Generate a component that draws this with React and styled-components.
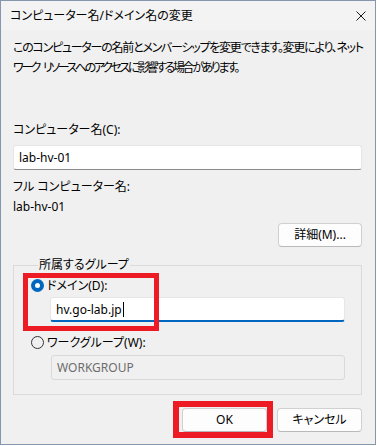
import React from "react";
import styled, { createGlobalStyle } from "styled-components";

const GlobalStyle = createGlobalStyle`
  html, body {
    margin: 0;
    padding: 0;
    background: #ffffff;
  }
  body {
    font-family: "Noto Sans", "Noto Sans CJK JP", sans-serif;
    font-size: 12px;
    color: #000;
    font-feature-settings: "palt";
  }
`;

const Dialog = styled.div`
  box-sizing: border-box;
  width: 376px;
  height: 445px;
  border: 1px solid #8497ad;
  background: #f0f0f0;
  display: flex;
  flex-direction: column;
`;

const TitleBar = styled.div`
  height: 29px;
  background: #f3f3f3;
  display: flex;
  align-items: center;
  justify-content: space-between;
  padding: 0 9px 0 9px;
  & .title {
    line-height: 20px;
    white-space: nowrap;
  }
`;

const Body = styled.div`
  padding: 0 13px 0 12px;
  display: flex;
  flex-direction: column;
`;

const Text = styled.div`
  line-height: 20px;
  white-space: nowrap;
  margin-top: ${(p) => p.$top || 0}px;
  letter-spacing: ${(p) => p.$tight || 0}px;
  word-spacing: ${(p) => (p.$tight ? 3 : 0)}px;
  color: ${(p) => (p.$muted ? "#6d6d6d" : "#000")};
`;

const TextBox = styled.div`
  box-sizing: border-box;
  height: 25px;
  margin-top: ${(p) => p.$top || 0}px;
  margin-left: ${(p) => p.$indent || 0}px;
  padding-left: 5px;
  display: flex;
  align-items: center;
  background: ${(p) => (p.$disabled ? "#f0f0f0" : "#ffffff")};
  border: 1px solid ${(p) => (p.$disabled ? "#d9d9d9" : "#e6e6e6")};
  border-bottom: ${(p) =>
    p.$focused ? "2px solid #0067c0" : p.$disabled ? "1px solid #d9d9d9" : "1px solid #8a8a8a"};
  border-radius: 3px;
  color: ${(p) => (p.$disabled ? "#6d6d6d" : "#000")};
  white-space: nowrap;
`;

const Caret = styled.span`
  display: inline-block;
  width: 1px;
  height: 15px;
  background: #000;
  margin-left: 1px;
`;

const ButtonRow = styled.div`
  display: flex;
  justify-content: flex-end;
  gap: 10px;
  margin-top: ${(p) => p.$top || 0}px;
`;

const Button = styled.div`
  box-sizing: border-box;
  width: ${(p) => p.$w || 84}px;
  height: 24px;
  background: #fdfdfd;
  border: 1px solid #d0d0d0;
  border-bottom-color: #b9b9b9;
  border-radius: 4px;
  display: flex;
  align-items: center;
  justify-content: center;
  line-height: 20px;
`;

const Highlight = styled.span`
  position: relative;
  display: inline-flex;
`;

const RedBox = styled.span`
  position: absolute;
  top: ${(p) => p.$t}px;
  left: ${(p) => p.$l}px;
  width: ${(p) => p.$w}px;
  height: ${(p) => p.$h}px;
  box-sizing: border-box;
  border: ${(p) => p.$b}px solid #ed1c24;
  pointer-events: none;
`;

const Group = styled.fieldset`
  position: relative;
  margin: 8px 0 0 0;
  padding: 0 16px 14px 17px;
  border: 1px solid #dadada;
  border-radius: 0;
  min-width: 0;
  & legend {
    padding: 0 1px;
    margin-left: 7px;
    line-height: 20px;
  }
`;

const RadioRow = styled.div`
  display: flex;
  align-items: center;
  gap: 3px;
  height: 20px;
  margin-top: ${(p) => p.$top || 0}px;
  white-space: nowrap;
`;

const Radio = styled.span`
  box-sizing: border-box;
  width: 13px;
  height: 13px;
  border-radius: 50%;
  display: flex;
  align-items: center;
  justify-content: center;
  background: ${(p) => (p.$checked ? "#0067c0" : "transparent")};
  border: ${(p) => (p.$checked ? "none" : "1px solid #333")};
  &::after {
    content: "";
    display: ${(p) => (p.$checked ? "block" : "none")};
    width: 5px;
    height: 5px;
    border-radius: 50%;
    background: #fff;
  }
`;

const CloseIcon = () => (
  <svg width="10" height="10" viewBox="0 0 10 10">
    <path d="M0.5 0.5 L9.5 9.5 M9.5 0.5 L0.5 9.5" stroke="#1a1a1a" strokeWidth="1" fill="none" />
  </svg>
);

export default function App() {
  return (
    <>
      <GlobalStyle />
      <Dialog>
        <TitleBar>
          <span className="title">コンピューター名/ドメイン名の変更</span>
          <CloseIcon />
        </TitleBar>
        <Body>
          <Text $top={8} $tight={-1.25}>
            このコンピューターの名前とメンバーシップを変更できます。変更により、ネット
          </Text>
          <Text $tight={-2.4}>ワーク リソースへのアクセスに影響する場合があります。</Text>
          <Text $top={42}>コンピューター名(C):</Text>
          <TextBox $top={5}>lab-hv-01</TextBox>
          <Text $top={7}>フル コンピューター名:</Text>
          <Text>lab-hv-01</Text>
          <ButtonRow $top={6}>
            <Button>詳細(M)...</Button>
          </ButtonRow>
          <Group>
            <legend>所属するグループ</legend>
            <RedBox $t={-2} $l={9} $w={136} $h={58} $b={5} />
            <RadioRow>
              <Radio $checked />
              ドメイン(D):
            </RadioRow>
            <TextBox $top={2} $indent={19} $focused>
              hv.go-lab.jp
              <Caret />
            </TextBox>
            <RadioRow $top={10}>
              <Radio />
              ワークグループ(W):
            </RadioRow>
            <TextBox $top={3} $indent={20} $disabled>
              WORKGROUP
            </TextBox>
          </Group>
          <ButtonRow $top={13}>
            <Highlight>
              <Button $w={85}>OK</Button>
              <RedBox $t={-7} $l={-9} $w={100} $h={37} $b={6} />
            </Highlight>
            <Button $w={85}>キャンセル</Button>
          </ButtonRow>
        </Body>
      </Dialog>
    </>
  );
}
